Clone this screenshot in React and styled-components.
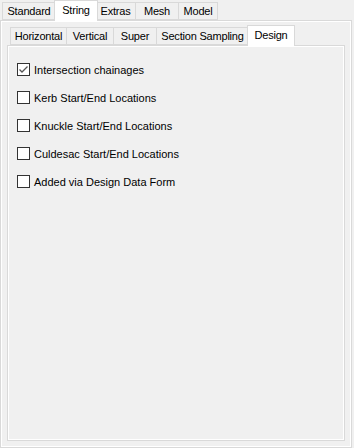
import React from "react";
import styled, { createGlobalStyle } from "styled-components";

const Global = createGlobalStyle`
  html, body { margin: 0; padding: 0; background: #f0f0f0; }
  body { font-family: "Liberation Sans", Arial, sans-serif; font-size: 11px; color: #000; }
`;

const Root = styled.div`
  width: 354px;
  height: 448px;
  box-sizing: border-box;
  display: flex;
  flex-direction: column;
  background: #f0f0f0;
`;

const TabBar = styled.div`
  display: flex;
  align-items: flex-end;
  height: 20px;
  flex: none;
  padding-left: ${(p) => p.$pad}px;
  position: relative;
  z-index: 1;
`;

const Tab = styled.div`
  box-sizing: border-box;
  width: ${(p) => p.$w + (p.$active ? 4 : 0)}px;
  height: ${(p) => (p.$active ? 21 : 18)}px;
  margin-bottom: ${(p) => (p.$active ? -1 : 0)}px;
  margin-left: ${(p) => (p.$active ? -2 : 0)}px;
  margin-right: ${(p) => (p.$active ? -2 : 0)}px;
  padding-bottom: ${(p) => (p.$active ? 3 : 1)}px;
  display: flex;
  align-items: center;
  justify-content: center;
  border: 1px solid #d9d9d9;
  border-bottom: ${(p) => (p.$active ? "none" : "1px solid #d9d9d9")};
  border-left: ${(p) => (p.$first || p.$active ? "1px solid #d9d9d9" : "none")};
  background: ${(p) => (p.$active ? "#ffffff" : "#f0f0f0")};
  position: relative;
  z-index: ${(p) => (p.$active ? 2 : 1)};
  white-space: nowrap;
  font-size: 11px;
  letter-spacing: -0.2px;
`;

const Panel = styled.div`
  box-sizing: border-box;
  border: 1px solid #d9d9d9;
  box-shadow: inset 1px 1px 0 #ffffff, inset -1px -1px 0 #ffffff;
  background: #f0f0f0;
  display: flex;
  flex-direction: column;
`;

const OuterPanel = styled(Panel)`
  width: 352px;
  height: 428px;
  padding: 4px 6px 6px 6px;
`;

const InnerPanel = styled(Panel)`
  flex: 1;
  padding: 17px 0 0 9px;
  gap: 15px;
`;

const Row = styled.label`
  display: flex;
  align-items: center;
  gap: 4px;
  height: 13px;
  font-size: 11px;
  white-space: nowrap;
`;

const Box = styled.span`
  box-sizing: border-box;
  flex: none;
  width: 13px;
  height: 13px;
  border: 1px solid #333333;
  background: #ffffff;
  display: flex;
  align-items: center;
  justify-content: center;
`;

const CheckBox = ({ checked }) => (
  <Box>
    {checked && (
      <svg width="11" height="11" viewBox="0 0 11 11">
        <path d="M1.5 5.5 L4 8 L9.5 2.5" fill="none" stroke="#555" strokeWidth="1.3" />
      </svg>
    )}
  </Box>
);

const outerTabs = [
  ["Standard", 54],
  ["String", 40],
  ["Extras", 40],
  ["Mesh", 43],
  ["Model", 39],
];
const innerTabs = [
  ["Horizontal", 57],
  ["Vertical", 47],
  ["Super", 43],
  ["Section Sampling", 92],
  ["Design", 44],
];
const items = [
  ["Intersection chainages", true],
  ["Kerb Start/End Locations", false],
  ["Knuckle Start/End Locations", false],
  ["Culdesac Start/End Locations", false],
  ["Added via Design Data Form", false],
];

export default function App() {
  return (
    <Root>
      <Global />
      <TabBar $pad={2}>
        {outerTabs.map(([t, w], i) => (
          <Tab key={t} $w={w} $first={i === 0} $active={t === "String"}>{t}</Tab>
        ))}
      </TabBar>
      <OuterPanel>
        <TabBar $pad={3}>
          {innerTabs.map(([t, w], i) => (
            <Tab key={t} $w={w} $first={i === 0} $active={t === "Design"}>{t}</Tab>
          ))}
        </TabBar>
        <InnerPanel>
          {items.map(([label, checked]) => (
            <Row key={label}>
              <CheckBox checked={checked} />
              {label}
            </Row>
          ))}
        </InnerPanel>
      </OuterPanel>
    </Root>
  );
}
